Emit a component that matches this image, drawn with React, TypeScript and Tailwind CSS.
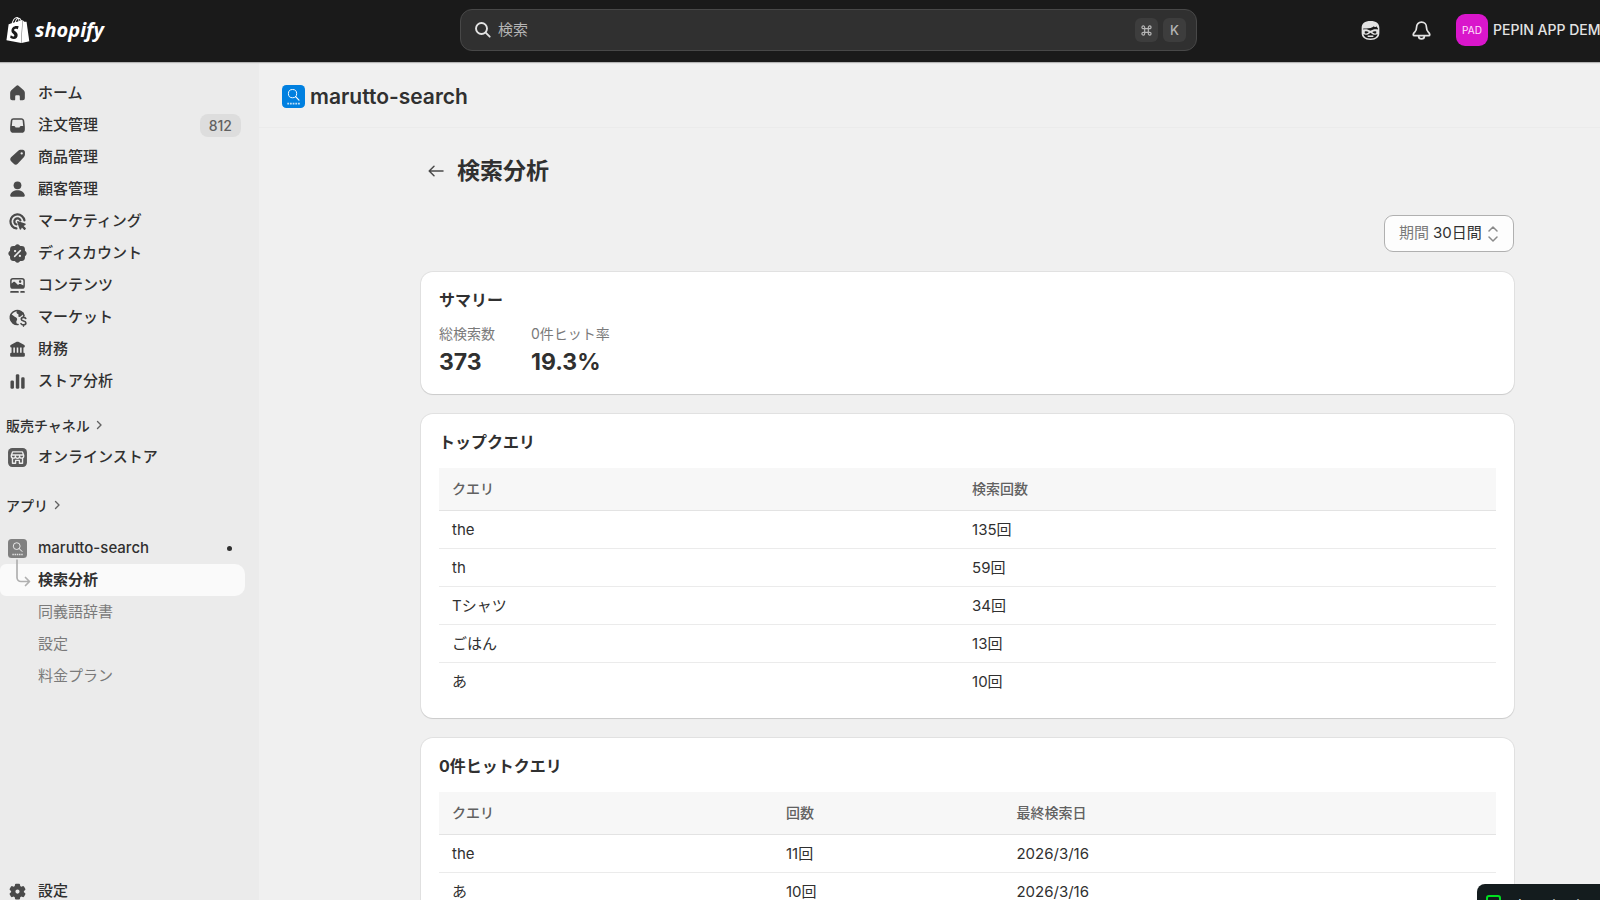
import type { ReactNode } from 'react';
import { SiShopify } from 'react-icons/si';

const FONT = "font-['Inter','Noto_Sans_CJK_JP',sans-serif]";

function Icon({ children }: { children: ReactNode }) {
  return (
    <svg viewBox="0 0 20 20" className="size-[21px] shrink-0" fill="#4a4a4a" aria-hidden="true">
      {children}
    </svg>
  );
}

const HomeIcon = (
  <Icon>
    <path d="M8.7 2.800a2 2 0 0 1 2.600 0l4.600 4a3.200 3.200 0 0 1 1.100 2.400v5.300a2 2 0 0 1-2 2h-2a.8.8 0 0 1-.8-.8v-2.700c0-.8-.5-1.300-1.200-1.300h-2c-.7 0-1.200.5-1.200 1.300v2.700a.8.8 0 0 1-.8.800H5a2 2 0 0 1-2-2V9.200a3.200 3.200 0 0 1 1.100-2.400z" />
  </Icon>
);
const OrdersIcon = (
  <Icon>
    <path
      fillRule="evenodd"
      d="M6.200 3h7.600c1.300 0 2.400 1 2.600 2.300l.5 4.700c.1.600.1 1.200.1 1.800v1.900A3.300 3.300 0 0 1 13.700 17H6.300A3.300 3.300 0 0 1 3 13.700v-1.900c0-.6 0-1.200.1-1.800l.5-4.700A2.600 2.600 0 0 1 6.200 3zm.1 1.500c-.6 0-1.100.4-1.200 1l-.5 5h2.100c.5 0 .9.300 1.100.7l.2.500c.1.200.3.300.5.300h3c.2 0 .4-.1.500-.3l.2-.5c.2-.4.600-.7 1.100-.7h2.100l-.5-5c-.1-.6-.6-1-1.200-1z"
    />
  </Icon>
);
const ProductsIcon = (
  <Icon>
    <path
      fillRule="evenodd"
      d="M10.700 3.500c.6-.6 1.300-.9 2.100-.9h2.100c1.200 0 2.200 1 2.200 2.200v2.400c0 .9-.3 1.700-.9 2.400l-6 6.400c-1.100 1.100-2.700 1.100-3.800 0l-2.500-2.500c-1.100-1.100-1.100-2.700 0-3.800zM14 7.200a1.100 1.100 0 1 0 0-2.200 1.100 1.100 0 0 0 0 2.200z"
    />
  </Icon>
);
const CustomersIcon = (
  <Icon>
    <circle cx="10" cy="6" r="3.700" />
    <path d="M3.100 15.200c.7-2.900 3.500-4.500 6.900-4.500s6.200 1.600 6.900 4.500c.3 1-.4 1.800-1.400 1.800h-11c-1 0-1.700-.8-1.400-1.800z" />
  </Icon>
);
const MarketingIcon = (
  <Icon>
    <path d="M9 16.600A6.700 6.700 0 1 1 16.600 9" fill="none" stroke="#4a4a4a" strokeWidth="2.100" strokeLinecap="round" />
    <path d="M9 12.800A3 3 0 1 1 12.800 9" fill="none" stroke="#4a4a4a" strokeWidth="2.100" strokeLinecap="round" />
    <path d="M9.700 10.600c-.2-.6.300-1.200.9-.9l6.700 2.200c.7.200.7 1.100.1 1.400l-1.600.9 2 2c.3.300.3.700 0 1l-.6.600c-.3.300-.7.300-1 0l-2-2-.8 1.500c-.3.600-1.200.6-1.400-.1z" />
  </Icon>
);
const DiscountIcon = (
  <Icon>
    <path d="M8.100 2.100c1-1.100 2.800-1.100 3.800 0l.7.800h1.300A3.200 3.200 0 0 1 17.100 6.100v1.300l.8.700c1.100 1 1.100 2.800 0 3.800l-.8.700v1.300a3.200 3.200 0 0 1-3.200 3.200h-1.300l-.7.800c-1 1.100-2.800 1.100-3.800 0l-.7-.8H6.100a3.200 3.200 0 0 1-3.200-3.200v-1.300l-.8-.7c-1.100-1-1.100-2.800 0-3.800l.8-.7V6.100a3.200 3.200 0 0 1 3.200-3.200h1.300z" />
    <path d="M7.300 12.700l5.400-5.400" stroke="#ebebeb" strokeWidth="1.500" strokeLinecap="round" />
    <circle cx="7.700" cy="7.700" r="1.100" fill="#ebebeb" />
    <circle cx="12.300" cy="12.300" r="1.100" fill="#ebebeb" />
  </Icon>
);
const ContentIcon = (
  <Icon>
    <path
      fillRule="evenodd"
      d="M5.700 2.800h8.600A2.700 2.700 0 0 1 17 5.500v5a2.700 2.700 0 0 1-2.700 2.700H5.700A2.700 2.700 0 0 1 3 10.500v-5a2.700 2.700 0 0 1 2.700-2.700zM5.800 4.200c-.8 0-1.400.6-1.400 1.400v2.600l1.400-1.300c.6-.5 1.400-.5 2 0l2.700 2.700.8-.7c.6-.5 1.500-.5 2.100 0l2.200 1V5.600c0-.8-.6-1.400-1.400-1.400zm6.700 3.300a1.200 1.200 0 1 0 0-2.400 1.200 1.200 0 0 0 0 2.400z"
    />
    <rect x="3" y="15.300" width="8.300" height="1.600" rx=".8" />
    <rect x="12.600" y="15.300" width="4.400" height="1.600" rx=".8" />
  </Icon>
);
const MarketsIcon = (
  <Icon>
    <path d="M16.200 8A6.700 6.700 0 1 0 10.500 16.700" fill="none" stroke="#4a4a4a" strokeWidth="1.500" strokeLinecap="round" />
    <path d="M3.200 7c1.800.1 3 1.700 4.200 2.300 1.300.6 2.300 1.200 2.300 2.400 0 1.300-1.100 1.600-.8 2.900l.7 2.200C5 16.800 2 12.600 3.200 7z" />
    <path d="M10.300 3.100l4.800 1.800c.9.700 1.200 1.500 1.200 2.400-1.100-.3-1.700.1-2.500 1-.8.800-1.800 1.600-2.700.9-.8-.6.300-1.500-.3-2.300-.5-.7-1.500-.5-1.700-1.500-.2-.9.400-1.700 1.200-2.300z" />
    <path d="M17.900 10.900c-.5-.7-1.300-1-2.200-1-1.200 0-2.100.7-2.100 1.700 0 2.300 4.400 1.200 4.400 3.600 0 1.100-1 1.800-2.300 1.800-1 0-1.900-.4-2.400-1.200M15.700 8.700v1.200m0 7.100v1.200" fill="none" stroke="#4a4a4a" strokeWidth="1.500" strokeLinecap="round" />
  </Icon>
);
const FinanceIcon = (
  <Icon>
    <path d="M9.200 2.700a2 2 0 0 1 1.600 0l5.300 2.700c.5.300.9.800.9 1.400 0 .8-.6 1.400-1.400 1.400H4.400A1.400 1.400 0 0 1 3 6.800c0-.6.300-1.100.9-1.400z" />
    <path d="M5.200 7.500v6M8.400 7.500v6M11.600 7.500v6M14.800 7.500v6" stroke="#4a4a4a" strokeWidth="1.700" />
    <rect x="3" y="13" width="14" height="3.800" rx="1.200" />
  </Icon>
);
const AnalyticsIcon = (
  <Icon>
    <rect x="3.300" y="9" width="3.300" height="8" rx="1.300" />
    <rect x="8.400" y="3" width="3.300" height="14" rx="1.300" />
    <rect x="13.500" y="6" width="3.300" height="11" rx="1.300" />
  </Icon>
);
const SettingsIcon = (
  <Icon>
    <path
      fillRule="evenodd"
      d="M8.800 2.500h2.400c.6 0 1.100.4 1.200 1l.2 1.300 1 .6 1.300-.5c.5-.2 1.100 0 1.400.5l1.100 1.900c.3.500.2 1.100-.3 1.500l-1 .8v1l1 .8c.5.400.6 1 .3 1.500l-1.100 1.900c-.3.500-.9.700-1.400.5l-1.300-.5-1 .6-.2 1.300c-.1.600-.6 1-1.200 1H8.800c-.6 0-1.100-.4-1.200-1l-.2-1.300-1-.6-1.300.5c-.5.200-1.100 0-1.400-.5l-1.100-1.900c-.3-.5-.2-1.100.3-1.500l1-.8v-1l-1-.8c-.5-.4-.6-1-.3-1.500l1.100-1.900c.3-.5.9-.7 1.400-.5l1.300.5 1-.6.2-1.300c.1-.6.600-1 1.200-1zM10 12.100a2 2 0 1 0 0-4 2 2 0 0 0 0 4z"
    />
  </Icon>
);
const StoreIcon = (
  <Icon>
    <rect x="1" y="1" width="18" height="18" rx="4" fill="#5a5a5a" />
    <g fill="none" stroke="#ebebeb" strokeWidth="1.300" strokeLinejoin="round">
      <path d="M5.300 4.700h9.400l1.200 3.100v.8a1.900 1.900 0 0 1-3.900.2 2 2 0 0 1-4 0 1.900 1.900 0 0 1-3.900-.2v-.8zM4.300 7.600h11.400M5.200 10.600v4.900h3v-2.800h3.600v2.800h3v-4.900" />
    </g>
  </Icon>
);

function AppMark({ className, fill }: { className: string; fill: string }) {
  return (
    <svg viewBox="0 0 24 24" className={className} aria-hidden="true">
      <rect width="24" height="24" rx="4.500" fill={fill} />
      <circle cx="11" cy="9" r="4.300" fill="none" stroke="#fff" strokeWidth="1" />
      <path d="M14.200 12.200l3.500 3.500" stroke="#fff" strokeWidth="1.200" strokeLinecap="round" />
      <path d="M5.500 19.500h13.500" stroke="#fff" strokeWidth="1.800" strokeDasharray="1.900 .9" opacity=".75" />
    </svg>
  );
}

const mainNav: { label: string; icon: ReactNode; badge?: string }[] = [
  { label: 'ホーム', icon: HomeIcon },
  { label: '注文管理', icon: OrdersIcon, badge: '812' },
  { label: '商品管理', icon: ProductsIcon },
  { label: '顧客管理', icon: CustomersIcon },
  { label: 'マーケティング', icon: MarketingIcon },
  { label: 'ディスカウント', icon: DiscountIcon },
  { label: 'コンテンツ', icon: ContentIcon },
  { label: 'マーケット', icon: MarketsIcon },
  { label: '財務', icon: FinanceIcon },
  { label: 'ストア分析', icon: AnalyticsIcon },
];

function NavItem({ label, icon, children }: { label: string; icon: ReactNode; children?: ReactNode }) {
  return (
    <a href="#" className="flex h-8 items-center gap-[10px] pr-[18px] pl-[7px] text-[15px] font-medium text-[#303030]">
      {icon}
      <span className="flex-1">{label}</span>
      {children}
    </a>
  );
}

function SectionLabel({ label }: { label: string }) {
  return (
    <button type="button" className="flex h-8 items-center gap-1 pl-[6px] text-[14px] font-medium text-[#303030]">
      {label}
      <svg viewBox="0 0 10 10" className="size-[10px]" fill="none" stroke="#616161" strokeWidth="1.400" strokeLinecap="round" strokeLinejoin="round">
        <path d="M3.500 1.500L7 5 3.500 8.500" />
      </svg>
    </button>
  );
}

function Sidebar() {
  return (
    <aside className="flex w-[259px] shrink-0 flex-col bg-[#ebebeb]">
      <nav className="flex-1 pt-[15px]">
        {mainNav.map((item) => (
          <NavItem key={item.label} label={item.label} icon={item.icon}>
            {item.badge && (
              <span className="rounded-lg bg-[#dddddd] px-[9px] text-[14px] leading-[23px] font-medium text-[#616161]">
                {item.badge}
              </span>
            )}
          </NavItem>
        ))}
        <div className="pt-3">
          <SectionLabel label="販売チャネル" />
          <NavItem label="オンラインストア" icon={StoreIcon} />
        </div>
        <div className="pt-4">
          <SectionLabel label="アプリ" />
        </div>
        <div className="pt-[11px]">
          <NavItem label="marutto-search" icon={<AppMark className="mx-px size-[19px] shrink-0" fill="#808080" />}>
            <span className="mr-[9px] size-[5px] rounded-full bg-[#303030]" />
          </NavItem>
          <a
            href="#"
            className="mr-[14px] flex h-8 items-center gap-2 rounded-r-[10px] rounded-l-[6px] bg-[#fafafa] pl-[14px] text-[15px] font-bold text-[#303030]"
          >
            <svg viewBox="0 0 16 32" className="h-8 w-4 overflow-visible" fill="none" stroke="#b0b0b0" strokeWidth="1.700" strokeLinecap="round" strokeLinejoin="round">
              <path d="M3 -4V13.500a4 4 0 0 0 4 4h8M11.500 13.500l4 4-4 4" />
            </svg>
            検索分析
          </a>
          {['同義語辞書', '設定', '料金プラン'].map((label) => (
            <a key={label} href="#" className="flex h-8 items-center pl-[38px] text-[15px] text-[#7a7a7a]">
              {label}
            </a>
          ))}
        </div>
      </nav>
      <div className="h-[25px] shrink-0">
        <NavItem label="設定" icon={SettingsIcon} />
      </div>
    </aside>
  );
}

function Header() {
  return (
    <header className="relative z-10 flex h-[62px] shrink-0 items-center bg-[#1a1a1a] pb-[2px] shadow-[0_1px_1px_#b5b5b5]">
      <a href="#" aria-label="Shopify" className="flex w-[460px] shrink-0 items-center gap-1 pl-[5px] text-white">
        <SiShopify className="size-[26px]" />
        <span className="font-['Open_Sans',sans-serif] text-[20px] leading-7 font-bold italic">shopify</span>
      </a>
      <label className="flex h-[42px] min-w-0 flex-1 items-center rounded-xl border border-[#484848] bg-[#303030] pr-[10px] pl-[13px]">
        <svg viewBox="0 0 18 18" className="size-[18px] shrink-0" fill="none" stroke="#e3e3e3" strokeWidth="1.900" strokeLinecap="round">
          <circle cx="7.500" cy="7.500" r="5.500" />
          <path d="M11.700 11.700l4 4" />
        </svg>
        <input
          type="text"
          placeholder="検索"
          aria-label="検索"
          className="min-w-0 flex-1 bg-transparent pl-[6px] text-[15px] text-[#e3e3e3] outline-none placeholder:text-[#b5b5b5]"
        />
        <span className="flex gap-[5px] text-[13px] leading-6 font-medium text-[#b5b5b5]">
          <kbd className="flex h-6 w-[23px] items-center justify-center rounded-md bg-[#3d3d3d]">
            <svg viewBox="0 0 12 12" className="size-[11px]" fill="none" stroke="#b5b5b5" strokeWidth="1.300">
              <path d="M4 4h4v4H4zM4 4H2.600A1.500 1.500 0 1 1 4 2.500zM8 4V2.500A1.500 1.500 0 1 1 9.500 4zM8 8h1.500A1.500 1.500 0 1 1 8 9.500zM4 8v1.500A1.500 1.500 0 1 1 2.500 8z" />
            </svg>
          </kbd>
          <kbd className="h-6 w-[23px] rounded-md bg-[#3d3d3d] text-center font-['Inter',sans-serif]">K</kbd>
        </span>
      </label>
      <div className="flex w-[403px] shrink-0 items-center pl-[162px]">
        <button type="button" aria-label="Sidekick" className="shrink-0">
          <svg viewBox="0 0 20 20" className="size-[23px]" aria-hidden="true">
            <path d="M10 1.800c5 0 7.700 2.300 7.700 6v4.400c0 3.800-2.700 6-7.700 6s-7.700-2.200-7.700-6V7.800c0-3.700 2.700-6 7.700-6z" fill="#e3e3e3" />
            <path d="M3.700 8.200c4 .5 7.200-.2 9.300-1.800.1.900 1.600.8 2.200-.2.300.8.700 1.300 1.200 1.600v1.300c-2.300-.6-4.500-.2-6.400 1.100-1.900-1.300-4-1.700-6.300-1.100z" fill="#1a1a1a" />
            <path d="M5 10.800c1.200-.4 2.400-.2 3.400.4-.8 1.200-2.200 1.600-3.400 1.100zM15 10.800c-1.200-.4-2.400-.2-3.400.4.8 1.200 2.200 1.600 3.400 1.100z" fill="#1a1a1a" />
            <path d="M3.800 13.300c2.500.8 4.800.2 6.200-1.400 1.400 1.600 3.700 2.200 6.200 1.400-.5 2.500-2.700 3.600-6.200 3.600s-5.700-1.100-6.200-3.600z" fill="#1a1a1a" />
            <path d="M8 15h4" stroke="#e3e3e3" strokeWidth="1.300" strokeLinecap="round" />
          </svg>
        </button>
        <button type="button" aria-label="通知" className="ml-[28px] shrink-0">
          <svg viewBox="0 0 20 20" className="size-[23px]" fill="none" stroke="#e3e3e3" strokeWidth="1.500" strokeLinecap="round" strokeLinejoin="round">
            <path d="M10 2.700c-2.600 0-4.300 2-4.300 4.400 0 2.200-.5 3-1.500 4.100-.8.800-1.400 1.600-1.400 2.400 0 .6.500.9 1.100.9h12.200c.6 0 1.100-.3 1.100-.9 0-.8-.6-1.600-1.400-2.400-1-1.100-1.500-1.900-1.500-4.100 0-2.400-1.700-4.400-4.300-4.400z" />
            <path d="M7.500 14.700c0 1.500 1.100 2.600 2.500 2.600s2.500-1.100 2.500-2.600" />
          </svg>
        </button>
        <button type="button" className="ml-[23px] flex items-center gap-[5px]">
          <span className="size-8 shrink-0 rounded-[9px] bg-[#d916cb] text-center text-[10px] leading-8 text-[#ffe3fb]">PAD</span>
          <span className="text-[14px] leading-5 font-medium whitespace-nowrap text-[#e3e3e3]">PEPIN APP DEMO</span>
        </button>
      </div>
    </header>
  );
}

function Card({ title, children }: { title: string; children: ReactNode }) {
  return (
    <section className="mb-5 rounded-xl bg-white p-[18px] shadow-[0_0_0_1px_rgba(0,0,0,0.06),0_1px_1px_0_rgba(0,0,0,0.1)]">
      <h2 className="text-[16px] leading-5 font-bold text-[#303030]">{title}</h2>
      {children}
    </section>
  );
}

function DataTable({ columns, rows }: { columns: { label: string; width: string }[]; rows: string[][] }) {
  return (
    <table className="mt-4 w-full table-fixed border-separate border-spacing-0 text-left text-[#303030]">
      <thead>
        <tr>
          {columns.map((col) => (
            <th
              key={col.label}
              scope="col"
              className={`${col.width} h-[43px] border-b border-[#e3e3e3] bg-[#f7f7f7] px-[13px] text-[14px] leading-5 font-medium text-[#616161]`}
            >
              {col.label}
            </th>
          ))}
        </tr>
      </thead>
      <tbody>
        {rows.map((row) => (
          <tr key={row[0]} className="group">
            {row.map((cell, i) => (
              <td key={i} className="h-[38px] border-b border-[#ebebeb] px-[13px] text-[15px] leading-5 group-last:h-[37px] group-last:border-b-0">
                {cell}
              </td>
            ))}
          </tr>
        ))}
      </tbody>
    </table>
  );
}

export default function App() {
  return (
    <div className={`${FONT} flex h-screen flex-col overflow-hidden bg-[#f0f0f0]`} lang="ja">
      <Header />
      <div className="flex min-h-0 flex-1">
        <Sidebar />
        <main className="min-w-0 flex-1 overflow-hidden">
          <div className="flex h-[66px] items-center gap-[5px] border-b border-[#ebebeb] pt-1 pl-[23px] text-[#303030]">
            <AppMark className="size-[23px]" fill="#0080e0" />
            <span className="text-[21px] leading-7 font-semibold">marutto-search</span>
          </div>
          <div className="pt-[29px] pr-[86px] pl-[162px]">
            <div className="flex h-7 items-center gap-[13px] pl-[7px]">
              <a href="#" aria-label="戻る">
                <svg viewBox="0 0 16 16" className="size-4" fill="none" stroke="#4a4a4a" strokeWidth="1.500" strokeLinecap="round" strokeLinejoin="round">
                  <path d="M15 8H1.500M6 3.300L1.200 8 6 12.700" />
                </svg>
              </a>
              <h1 className="text-[23px] leading-7 font-bold text-[#303030]">検索分析</h1>
            </div>
            <div className="mt-[30px] mb-5 flex justify-end">
              <div className="relative flex h-[37px] items-center rounded-[9px] border border-[#b0b0b0] bg-[#fdfdfd] pl-[14px] text-[15px]">
                <label htmlFor="period" className="text-[#7a7a7a]">
                  期間
                </label>
                <select id="period" className="h-full appearance-none bg-transparent pr-[31px] pl-1 text-[#303030] outline-none">
                  <option>30日間</option>
                </select>
                <svg viewBox="0 0 12 16" className="pointer-events-none absolute right-[14px] h-4 w-3" fill="none" stroke="#8a8a8a" strokeWidth="1.500" strokeLinecap="round" strokeLinejoin="round">
                  <path d="M2 5l4-4 4 4M2 11l4 4 4-4" />
                </svg>
              </div>
            </div>
            <Card title="サマリー">
              <dl className="mt-[14px] flex gap-9">
                <div>
                  <dt className="text-[14px] leading-5 text-[#7a7a7a]">総検索数</dt>
                  <dd className="mt-1 text-[23px] leading-7 font-bold text-[#303030]">373</dd>
                </div>
                <div>
                  <dt className="text-[14px] leading-5 text-[#7a7a7a]">0件ヒット率</dt>
                  <dd className="mt-1 text-[23px] leading-7 font-bold text-[#303030]">19.3%</dd>
                </div>
              </dl>
            </Card>
            <Card title="トップクエリ">
              <DataTable
                columns={[
                  { label: 'クエリ', width: 'w-[49.2%]' },
                  { label: '検索回数', width: 'w-[50.8%]' },
                ]}
                rows={[
                  ['the', '135回'],
                  ['th', '59回'],
                  ['Tシャツ', '34回'],
                  ['ごはん', '13回'],
                  ['あ', '10回'],
                ]}
              />
            </Card>
            <Card title="0件ヒットクエリ">
              <DataTable
                columns={[
                  { label: 'クエリ', width: 'w-[31.6%]' },
                  { label: '回数', width: 'w-[21.8%]' },
                  { label: '最終検索日', width: 'w-[46.6%]' },
                ]}
                rows={[
                  ['the', '11回', '2026/3/16'],
                  ['あ', '10回', '2026/3/16'],
                ]}
              />
            </Card>
          </div>
        </main>
      </div>
      <div className="fixed top-[884px] right-0 z-20 flex h-10 w-[123px] items-start gap-3 overflow-hidden rounded-tl-lg bg-[#141c1e] pt-[11px] pl-[9px] whitespace-nowrap text-[#e3e3e3]">
        <span className="size-[15px] shrink-0 rounded-[3px] border-2 border-[#00e020]" />
        <span className="text-[14px] leading-5">dropping it</span>
      </div>
    </div>
  );
}
